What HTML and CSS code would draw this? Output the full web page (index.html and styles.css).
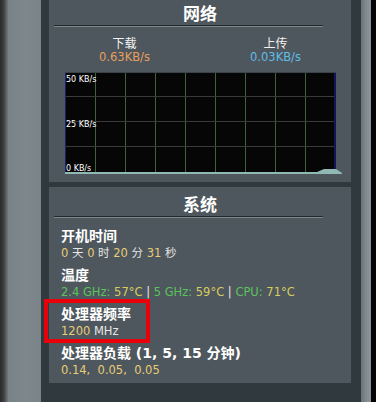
FILE: index.html
```html
<!DOCTYPE html>
<html lang="zh-CN">
<head>
<meta charset="utf-8">
<title>网络 / 系统</title>
<link rel="stylesheet" href="styles.css">
</head>
<body>
<div class="page">
  <div class="edge-l"></div>
  <div class="rail-l"></div>
  <div class="main">
    <section class="panel net">
      <div class="ptitle">网络</div>
      <div class="split"></div>
      <div class="rates">
        <div class="rate">
          <div class="rlabel">下载</div>
          <div class="rval down">0.63KB/s</div>
        </div>
        <div class="rate">
          <div class="rlabel">上传</div>
          <div class="rval up">0.03KB/s</div>
        </div>
      </div>
      <div class="chart">
        <svg width="278" height="103" viewBox="0 0 278 103">
          <rect x="0" y="0" width="271" height="100" fill="#060606"/>
          <g stroke="#3e613e" stroke-width="1">
            <line x1="30.5" y1="0" x2="30.5" y2="100"/>
            <line x1="60.5" y1="0" x2="60.5" y2="100"/>
            <line x1="90.5" y1="0" x2="90.5" y2="100"/>
            <line x1="120.5" y1="0" x2="120.5" y2="100"/>
            <line x1="150.5" y1="0" x2="150.5" y2="100"/>
            <line x1="180.5" y1="0" x2="180.5" y2="100"/>
            <line x1="210.5" y1="0" x2="210.5" y2="100"/>
            <line x1="240.5" y1="0" x2="240.5" y2="100"/>
          </g>
          <g stroke="#3a3a3a" stroke-width="1">
            <line x1="0" y1="24.5" x2="271" y2="24.5"/>
            <line x1="0" y1="49.5" x2="271" y2="49.5"/>
            <line x1="0" y1="74.5" x2="271" y2="74.5"/>
          </g>
          <line x1="0.5" y1="0" x2="0.5" y2="100" stroke="#1d1d70"/>
          <line x1="270" y1="0" x2="270" y2="100" stroke="#14145e" stroke-width="2"/>
          <line x1="0" y1="0.5" x2="271" y2="0.5" stroke="#3b4248"/>
          <g class="axis" fill="#ffffff" font-size="8">
            <text x="1" y="10">50 KB/s</text>
            <text x="1" y="55">25 KB/s</text>
            <text x="1" y="99">0 KB/s</text>
          </g>
          <polygon points="0,100 252,100 259,97 271,97 277,101 277,102 0,102" fill="#8fb9b2"/>
        </svg>
      </div>
    </section>
    <section class="panel sys">
      <div class="ptitle">系统</div>
      <div class="split"></div>
      <div class="stats">
        <div class="stat">
          <div class="slabel">开机时间</div>
          <div class="sval"><span class="y">0</span> 天 <span class="y">0</span> 时 <span class="y">20</span> 分 <span class="y">31</span> 秒</div>
        </div>
        <div class="stat">
          <div class="slabel">温度</div>
          <div class="sval"><span class="g">2.4 GHz:</span> <span class="t">57°C</span> | <span class="g">5 GHz:</span> <span class="t">59°C</span> | <span class="g">CPU:</span> <span class="t">71°C</span></div>
        </div>
        <div class="stat marked">
          <div class="slabel">处理器频率</div>
          <div class="sval"><span class="y">1200</span> MHz</div>
          <div class="mark"></div>
        </div>
        <div class="stat">
          <div class="slabel">处理器负载 (1, 5, 15 分钟)</div>
          <div class="sval"><span class="y">0.14,&nbsp; 0.05,&nbsp; 0.05</span></div>
        </div>
      </div>
    </section>
  </div>
  <div class="rail-r"></div>
  <div class="edge-r"></div>
</div>
</body>
</html>
```

FILE: styles.css
```css
html, body {
  margin: 0;
  padding: 0;
  height: 100%;
  overflow: hidden;
  background: #2f393e;
}

body {
  font-family: "DejaVu Sans", "Noto Sans CJK SC", sans-serif;
  color: #ffffff;
}

.page {
  display: flex;
  height: 402px;
  width: 376px;
}

.edge-l {
  width: 8px;
  background: linear-gradient(to right, #2c2c2c, #3a3a3a 40%, #5c6266 80%, #737b80);
}

.rail-l {
  width: 33px;
  background: linear-gradient(to right, #788186, #7e878c 50%, #7a8388);
}

.main {
  width: 320px;
  background: #2f393e;
  padding: 0 10px 0 8px;
  box-sizing: border-box;
  display: flex;
  flex-direction: column;
}

.rail-r {
  width: 10px;
  background: linear-gradient(to right, #6a7377, #858e93 60%, #8a9398);
}

.edge-r {
  width: 5px;
  background: #050505;
}

.panel {
  background: #4e575d;
  flex: none;
}

.net {
  margin-top: -4px;
  height: 186px;
  box-sizing: border-box;
}

.sys {
  margin-top: 5px;
  height: 196px;
  box-sizing: border-box;
}

.ptitle {
  padding-top: 5px;
  height: 24px;
  line-height: 24px;
  text-align: center;
  font-family: "Noto Sans CJK SC", sans-serif;
  font-weight: 700;
  font-size: 17px;
  color: #ffffff;
}

.split {
  margin-left: 5px;
  width: 269px;
  height: 1px;
  background: #1f2a2f;
  border-bottom: 1px solid #7d878c;
}

.rates {
  display: flex;
  padding-top: 9px;
}

.rate {
  flex: 1;
  text-align: center;
}

.rlabel {
  font-family: "Noto Sans CJK SC", sans-serif;
  font-size: 12px;
  line-height: 14px;
  color: #f2f2f2;
}

.rval {
  font-size: 11.5px;
  line-height: 14px;
}

.down { color: #e79e60; }
.up { color: #5fbde6; }

.chart {
  margin: 8px 0 0 16px;
  height: 103px;
}

.chart svg {
  display: block;
}

.axis {
  font-family: "DejaVu Sans", sans-serif;
}

.stats {
  padding: 10px 0 0 12px;
  display: flex;
  flex-direction: column;
  gap: 6px;
}

.stat {
  position: relative;
}

.slabel {
  font-family: "DejaVu Sans", "Noto Sans CJK SC", sans-serif;
  font-weight: 700;
  font-size: 14px;
  line-height: 17px;
  color: #ffffff;
}

.sval {
  font-size: 11.5px;
  line-height: 16px;
  color: #e6e6e6;
}

.y { color: #e8cc78; }
.g { color: #5cc25c; }
.t { color: #d6cc60; }

.mark {
  position: absolute;
  left: -17px;
  top: -7px;
  width: 106px;
  height: 44px;
  box-sizing: border-box;
  border: 4px solid #e8000b;
}
```
